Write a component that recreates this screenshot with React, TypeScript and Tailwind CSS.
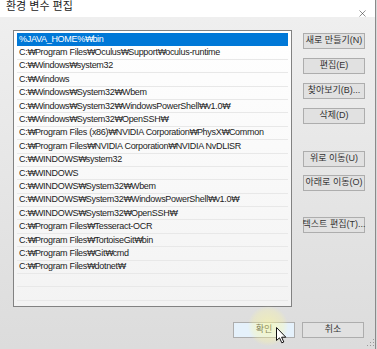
import { X } from 'lucide-react';

const PATHS = [
  '%JAVA_HOME%₩bin',
  'C:₩Program Files₩Oculus₩Support₩oculus-runtime',
  'C:₩Windows₩system32',
  'C:₩Windows',
  'C:₩Windows₩System32₩Wbem',
  'C:₩Windows₩System32₩WindowsPowerShell₩v1.0₩',
  'C:₩Windows₩System32₩OpenSSH₩',
  'C:₩Program Files (x86)₩NVIDIA Corporation₩PhysX₩Common',
  'C:₩Program Files₩NVIDIA Corporation₩NVIDIA NvDLISR',
  'C:₩WINDOWS₩system32',
  'C:₩WINDOWS',
  'C:₩WINDOWS₩System32₩Wbem',
  'C:₩WINDOWS₩System32₩WindowsPowerShell₩v1.0₩',
  'C:₩WINDOWS₩System32₩OpenSSH₩',
  'C:₩Program Files₩Tesseract-OCR',
  'C:₩Program Files₩TortoiseGit₩bin',
  'C:₩Program Files₩Git₩cmd',
  'C:₩Program Files₩dotnet₩',
  '',
  '',
];

const FONT = "font-['Liberation_Sans','Noto_Sans','DejaVu_Sans','Noto_Sans_CJK_KR',sans-serif]";

// Korean Windows shows the backslash as a narrow won sign
function PathText({ text }: { text: string }) {
  const parts = text.split('₩');
  return (
    <>
      {parts.map((part, i) => (
        <span key={i}>
          {part}
          {i < parts.length - 1 && <span className="tracking-[-1px] font-light">₩</span>}
        </span>
      ))}
    </>
  );
}

function WinButton({ label, className = '' }: { label: string; className?: string }) {
  return (
    <div
      className={`h-[16px] w-[62px] flex items-center justify-center border border-[#adadad] bg-[#e1e1e1] text-[9px] text-[#333] whitespace-nowrap ${className}`}
    >
      {label}
    </div>
  );
}

export default function App() {
  return (
    <div className={`relative w-[377px] h-[349px] overflow-hidden bg-[#d8d8d8] ${FONT}`}>
      <div className="w-[376px] h-[349px] border-r border-[#8a8a8a] flex flex-col bg-gradient-to-b from-[#f0f0f0] to-[#dcdcdc]">
        {/* title bar */}
        <div className="h-[17px] bg-white flex items-start justify-between pl-[6px] pr-[7px]">
          <span className="text-[11px] leading-[12px] text-[#222]">환경 변수 편집</span>
          <X size={11} strokeWidth={1.2} className="mt-[8px] text-[#333]" />
        </div>

        {/* body */}
        <div className="flex pl-[13px] pt-[13px]">
          <div className="w-[279px] h-[277px] border border-[#828282] bg-gradient-to-b from-white to-[#f3f3f3] pt-[2px] px-[3px] overflow-hidden">
            {PATHS.map((p, i) => (
              <div
                key={i}
                className={`h-[13.4px] flex items-center pl-[2px] text-[9px] tracking-[-0.3px] leading-none whitespace-nowrap border-b ${
                  i === 0
                    ? 'bg-[#0078d7] text-white border-[#0078d7]'
                    : 'text-[#222] border-[#e8e8e8]'
                }`}
              >
                <PathText text={p} />
              </div>
            ))}
          </div>

          <div className="flex flex-col pl-[11px] pt-[3px]">
            <WinButton label="새로 만들기(N)" />
            <WinButton label="편집(E)" className="mt-[9px]" />
            <WinButton label="찾아보기(B)..." className="mt-[9px]" />
            <WinButton label="삭제(D)" className="mt-[9px]" />
            <WinButton label="위로 이동(U)" className="mt-[27px]" />
            <WinButton label="아래로 이동(O)" className="mt-[8px]" />
            <WinButton label="텍스트 편집(T)..." className="mt-[26px]" />
          </div>
        </div>

        {/* footer */}
        <div className="flex justify-end gap-[7px] pr-[11px] pt-[15px]">
          <WinButton label="확인" className="border-[#0078d7] bg-[#e5f1fb]" />
          <WinButton label="취소" />
        </div>
      </div>

      {/* mouse highlight + cursor */}
      <div className="absolute left-[248px] top-[306px] w-[40px] h-[40px] rounded-full bg-[radial-gradient(circle,rgba(255,250,150,0.55)_0%,rgba(255,250,150,0.25)_55%,rgba(255,250,150,0)_72%)]" />
      <svg className="absolute left-[276px] top-[327px]" width="11" height="17" viewBox="0 0 11 17">
        <path d="M0.5 0.5 L0.5 13.5 L3.5 10.8 L5.8 15.8 L7.8 15 L5.6 10.2 L9.8 10.2 Z" fill="white" stroke="#111" strokeWidth="1" strokeLinejoin="round" />
      </svg>

      {/* resize grip */}
      <svg className="absolute left-[367px] top-[339px]" width="8" height="8" viewBox="0 0 8 8">
        <rect x="6" y="0" width="1" height="1" fill="#999" />
        <rect x="3" y="3" width="1" height="1" fill="#999" />
        <rect x="6" y="3" width="1" height="1" fill="#999" />
        <rect x="0" y="6" width="1" height="1" fill="#999" />
        <rect x="3" y="6" width="1" height="1" fill="#999" />
        <rect x="6" y="6" width="1" height="1" fill="#999" />
      </svg>
    </div>
  );
}
